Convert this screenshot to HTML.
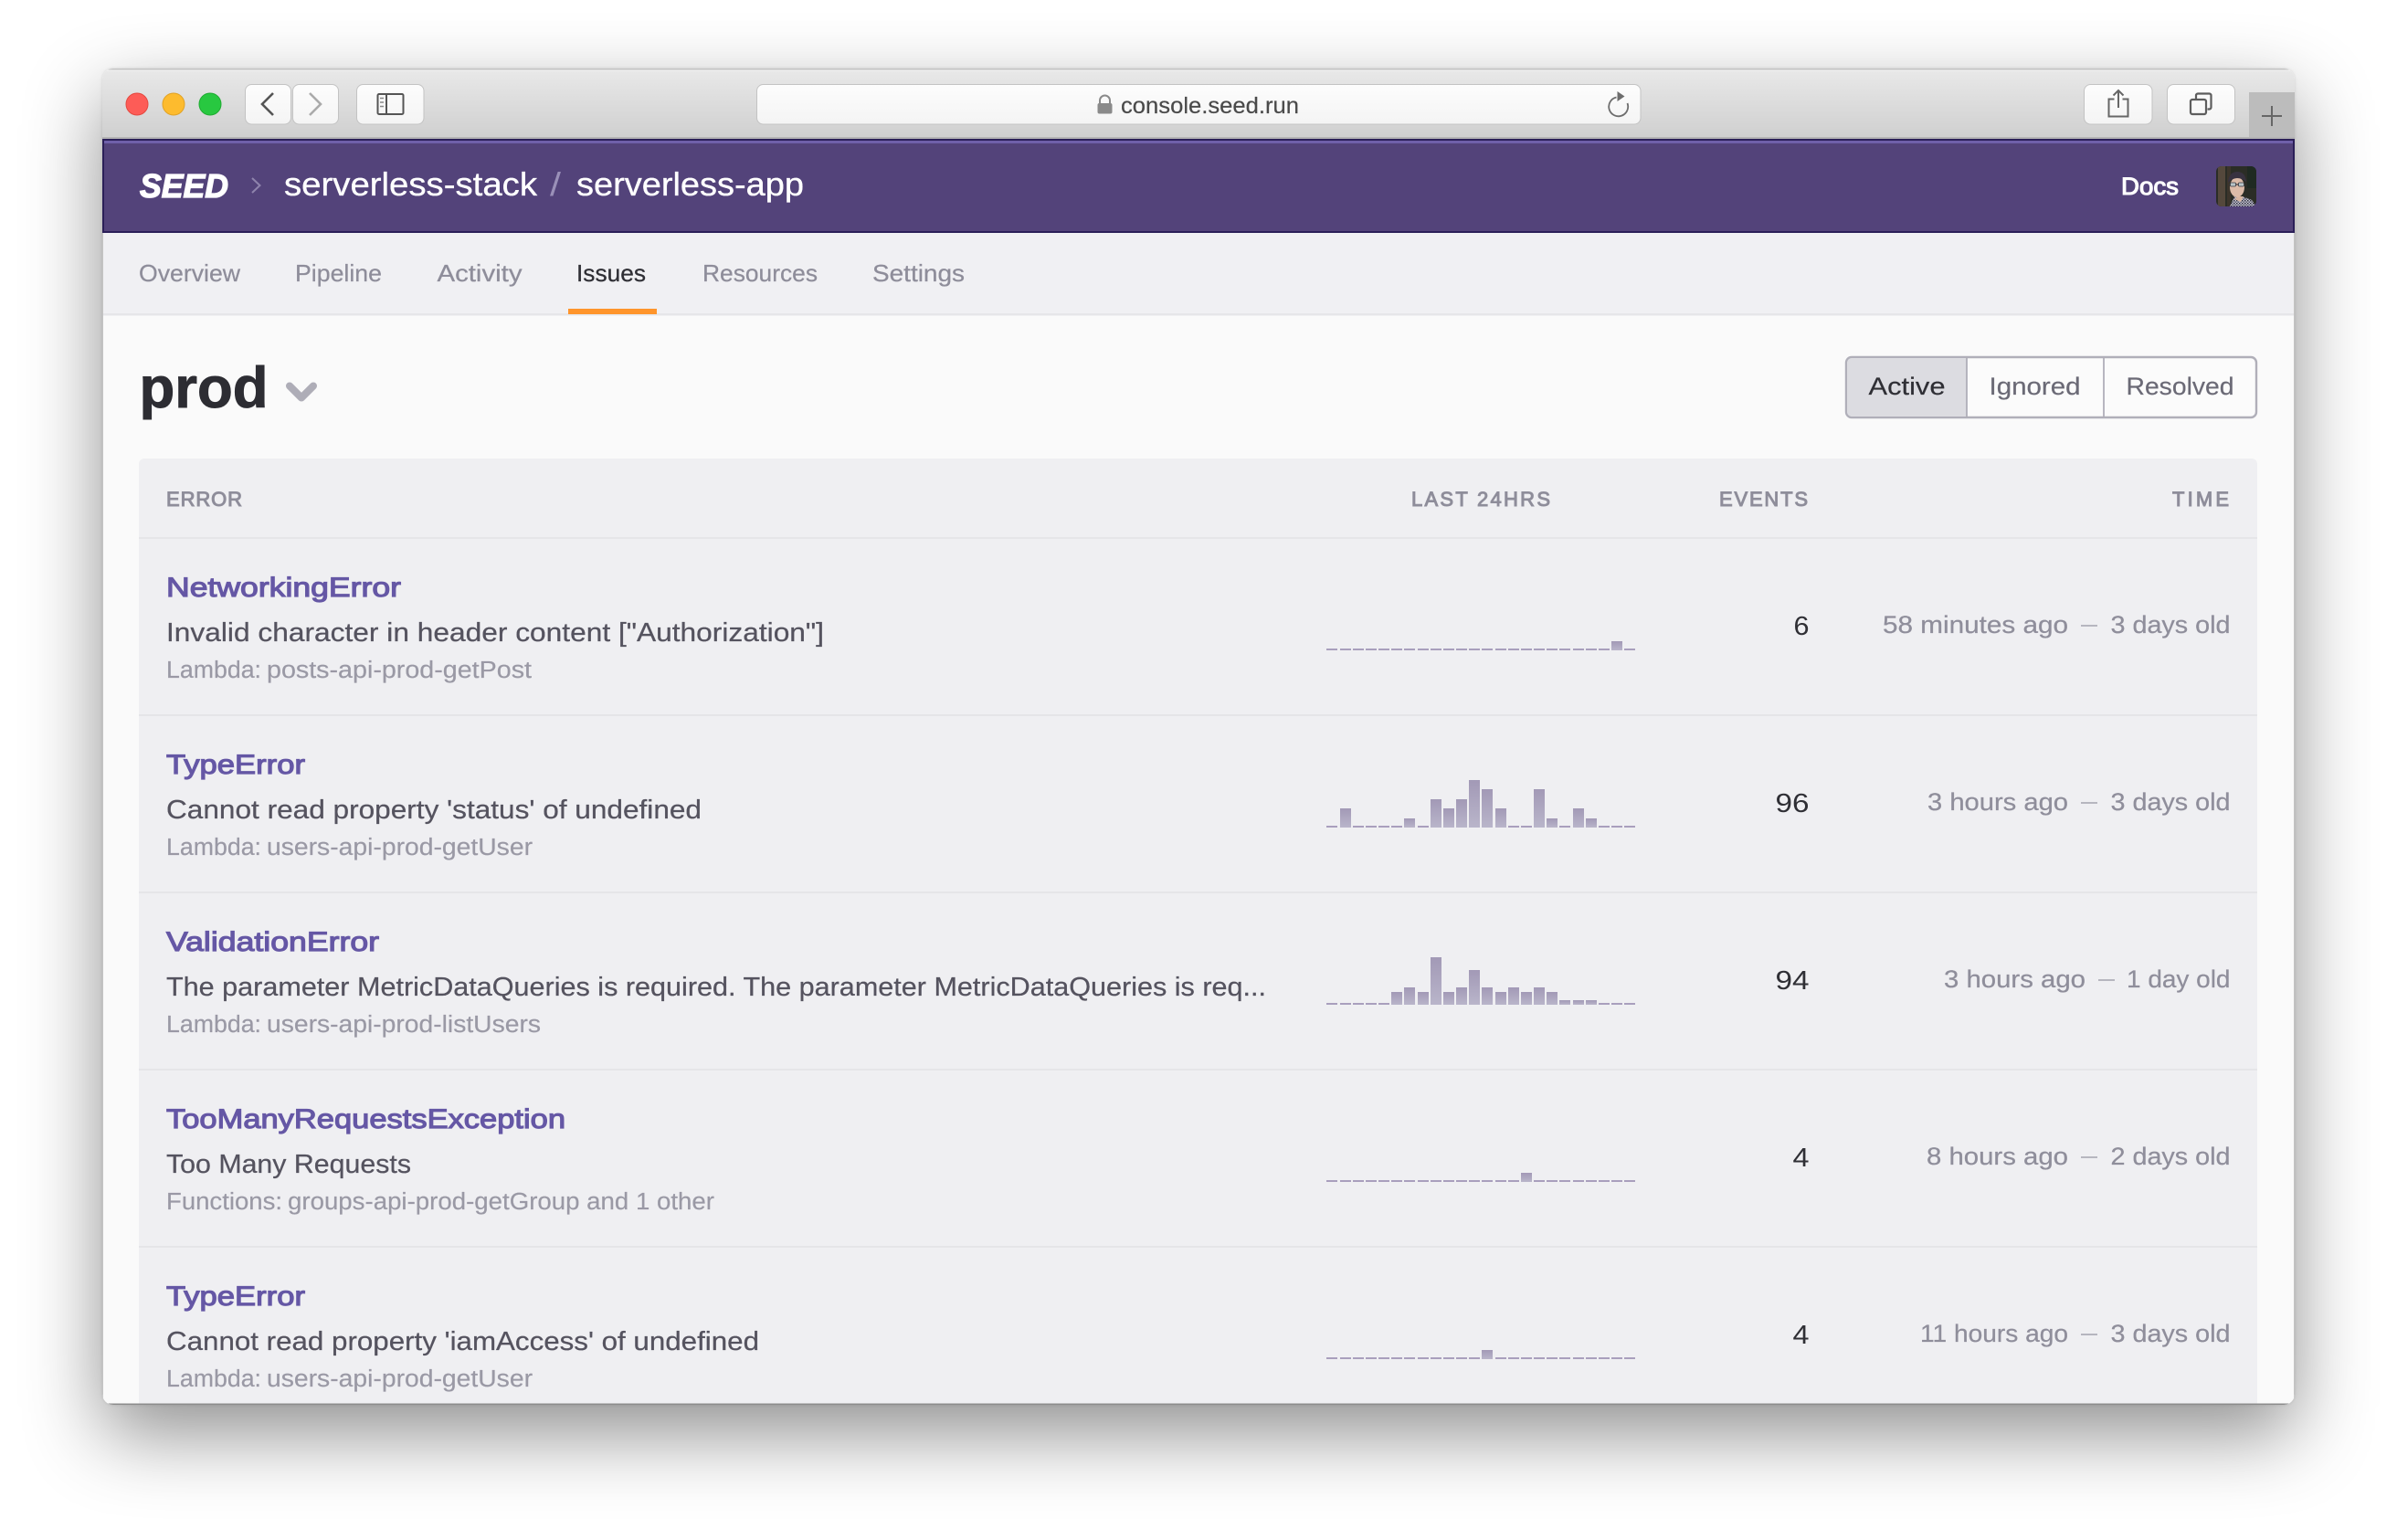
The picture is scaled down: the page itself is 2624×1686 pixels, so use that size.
<!DOCTYPE html>
<html lang="en">
<head>
<meta charset="utf-8">
<title>Issues - SEED</title>
<style>
html,body{margin:0;padding:0;width:2624px;height:1686px;background:#fff;overflow:hidden}
#win{position:absolute;left:112px;top:75px;width:2400px;height:1463px;border-radius:12px;box-shadow:0 32px 84px rgba(0,0,0,.44),0 0 3px rgba(0,0,0,.12)}
svg{position:absolute;left:0;top:0}
text{font-family:"Liberation Sans",sans-serif;white-space:pre}
.tab{font-size:26px;fill:#8e8d9a;stroke:#8e8d9a;stroke-width:.25px}
.hd{font-size:22px;fill:#8e8d9a;stroke:#8e8d9a;stroke-width:1px}
.t{font-size:30px;fill:#6557a5;stroke:#6557a5;stroke-width:1.15px}
.d{font-size:28.5px;fill:#55535f;stroke:#55535f;stroke-width:.25px}
.l{font-size:25.5px;fill:#9a99a5;stroke:#9a99a5;stroke-width:.2px}
.n{font-size:28.5px;fill:#2f2f35}
.r{font-size:27px;fill:#8f8e9b;stroke:#8f8e9b;stroke-width:.25px}
.seg{font-size:27px;fill:#6b6a76;stroke:#6b6a76;stroke-width:.2px}
.h1{font-size:36px;fill:#fff;stroke:#fff;stroke-width:.35px}
</style>
</head>
<body>
<div id="win"></div>
<svg width="2624" height="1686" viewBox="0 0 2624 1686" xmlns="http://www.w3.org/2000/svg">
<defs>
<clipPath id="w"><rect x="112" y="75" width="2400" height="1463" rx="12"/></clipPath>
<clipPath id="av"><rect x="2426" y="182" width="44" height="44" rx="6"/></clipPath>
<linearGradient id="tb" x1="0" y1="0" x2="0" y2="1"><stop offset="0" stop-color="#e9e9e9"/><stop offset="1" stop-color="#cfcfcf"/></linearGradient>
<linearGradient id="btn" x1="0" y1="0" x2="0" y2="1"><stop offset="0" stop-color="#fdfdfd"/><stop offset="1" stop-color="#f4f4f4"/></linearGradient>
<linearGradient id="bar" x1="0" y1="0" x2="0" y2="1"><stop offset="0" stop-color="#a299b6"/><stop offset="1" stop-color="#b9b5ca"/></linearGradient>
<pattern id="chk" width="3" height="3" patternUnits="userSpaceOnUse"><rect width="3" height="3" fill="#c9c9d4"/><rect width="1.500" height="1.500" fill="#2c2c3c"/><rect x="1.500" y="1.500" width="1.500" height="1.500" fill="#55556a"/></pattern>
<path id="dashes" fill="#a99fbd" d="M1452-2h12v2h-12zM1467-2h12v2h-12zM1481-2h12v2h-12zM1495-2h12v2h-12zM1509-2h12v2h-12zM1523-2h12v2h-12zM1537-2h12v2h-12zM1552-2h12v2h-12zM1566-2h12v2h-12zM1580-2h12v2h-12zM1594-2h12v2h-12zM1608-2h12v2h-12zM1622-2h12v2h-12zM1637-2h12v2h-12zM1651-2h12v2h-12zM1665-2h12v2h-12zM1679-2h12v2h-12zM1693-2h12v2h-12zM1707-2h12v2h-12zM1722-2h12v2h-12zM1736-2h12v2h-12zM1750-2h12v2h-12zM1764-2h12v2h-12zM1778-2h12v2h-12z"/>
</defs>

<g clip-path="url(#w)">
<!-- window base -->
<rect x="112" y="75" width="2400" height="1463" fill="#fafafa"/>

<!-- toolbar -->
<rect x="112" y="75" width="2400" height="77" fill="url(#tb)"/>
<rect x="112" y="75" width="2400" height="1.500" fill="#c4c4c4"/>
<rect x="112" y="76.500" width="2400" height="1.500" fill="#efefef"/>
<rect x="112" y="150" width="2400" height="2" fill="#b4b4b4"/>

<circle cx="150" cy="114" r="12" fill="#fd5c57" stroke="#e4483f" stroke-width="1"/>
<circle cx="190" cy="114" r="12" fill="#fdbb2e" stroke="#e0a226" stroke-width="1"/>
<circle cx="230" cy="114" r="12" fill="#28c840" stroke="#20ab32" stroke-width="1"/>

<g fill="url(#btn)" stroke="#c3c3c3" stroke-width="1">
<rect x="268.500" y="92.500" width="50" height="43.500" rx="7"/>
<rect x="320.500" y="92.500" width="50" height="43.500" rx="7"/>
<rect x="390.500" y="92.500" width="73.500" height="43.500" rx="7"/>
<rect x="828.500" y="92.500" width="967.500" height="43.500" rx="7"/>
<rect x="2281.500" y="92.500" width="74.500" height="43.500" rx="7"/>
<rect x="2372.500" y="92.500" width="74" height="43.500" rx="7"/>
</g>

<path d="M299 102L287 114L299 126" fill="none" stroke="#555" stroke-width="2.600"/>
<path d="M339 102L351 114L339 126" fill="none" stroke="#aaa" stroke-width="2.600"/>
<rect x="413.500" y="103" width="28" height="22" rx="1.500" fill="none" stroke="#555" stroke-width="2"/>
<path d="M423 103v22" stroke="#555" stroke-width="2"/>
<path d="M416 107.500h4M416 112h4M416 116.500h4" stroke="#888" stroke-width="1.600"/>

<!-- address -->
<path d="M1204 114v-4a5.500 5.500 0 0 1 11 0v4" fill="none" stroke="#8a8a8a" stroke-width="2"/>
<rect x="1201.500" y="113" width="16" height="11.500" rx="2" fill="#8a8a8a"/>
<text x="1227" y="124" font-size="25" fill="#4a4a4a" stroke="#4a4a4a" stroke-width=".2" textLength="195" lengthAdjust="spacingAndGlyphs">console.seed.run</text>
<path d="M1769.500 106.500A10.500 10.500 0 1 0 1781.500 113" fill="none" stroke="#6d6d6d" stroke-width="1.800"/>
<path d="M1770.500 100l8 5.500-8 5.500z" fill="#6d6d6d"/>

<!-- share / tabs -->
<path d="M2314.500 108.500H2308.500V127.500H2329.500V108.500H2323.500" fill="none" stroke="#666" stroke-width="2"/>
<path d="M2319 99v19M2313.500 104.500L2319 99l5.500 5.500" fill="none" stroke="#666" stroke-width="2"/>
<rect x="2398" y="109" width="17" height="16" rx="2" fill="none" stroke="#5d5d5d" stroke-width="2.200"/>
<path d="M2404 108v-3.500a2 2 0 0 1 2-2h12.500a2 2 0 0 1 2 2v13a2 2 0 0 1-2 2h-2" fill="none" stroke="#5d5d5d" stroke-width="2.200"/>

<rect x="2462" y="101" width="50" height="49" fill="#bcbcbc"/>
<path d="M2476 127h22M2487 116v22" stroke="#666" stroke-width="2"/>

<!-- purple header -->
<rect x="112" y="152" width="2400" height="103" fill="#2b1f58"/>
<rect x="114" y="154" width="2396" height="3" fill="#6f60aa"/>
<rect x="114" y="157" width="2396" height="96" fill="#53437a"/>

<text x="153" y="216" font-size="36" font-weight="700" font-style="italic" fill="#fff" stroke="#fff" stroke-width="1.300" textLength="97" lengthAdjust="spacingAndGlyphs">SEED</text>
<path d="M276 195l8.500 8-8.500 8" fill="none" stroke="#8f84ad" stroke-width="2"/>
<text class="h1" x="311" y="214" textLength="277" lengthAdjust="spacingAndGlyphs">serverless-stack</text>
<text x="602" y="214" font-size="36" fill="#9a90b8" textLength="12" lengthAdjust="spacingAndGlyphs">/</text>
<text class="h1" x="631" y="214" textLength="249" lengthAdjust="spacingAndGlyphs">serverless-app</text>
<text x="2322" y="213" font-size="27" fill="#fff" stroke="#fff" stroke-width="1.100" textLength="63" lengthAdjust="spacingAndGlyphs">Docs</text>

<!-- avatar -->
<g clip-path="url(#av)">
<rect x="2426" y="182" width="44" height="44" fill="#2b2d26"/>
<rect x="2428" y="182" width="8" height="44" fill="#54483c"/>
<rect x="2438" y="182" width="4" height="44" fill="#3c352b"/>
<rect x="2460" y="182" width="10" height="24" fill="#1f2a22"/>
<path d="M2441 226l5-11h9l10 4 5 7z" fill="url(#chk)"/>
<path d="M2446 218l4-3h6l-3 6z" fill="#d8b6a2"/>
<ellipse cx="2449" cy="205" rx="8" ry="11" fill="#dcbba8"/>
<path d="M2439 200q1-12 10-12t10 11q-5-4-10-4t-10 5z" fill="#383240"/>
<path d="M2440 202h17" stroke="#3a3a40" stroke-width="1.200"/>
<rect x="2441.500" y="200" width="6" height="4" rx="1" fill="#b8c4c8" stroke="#3a3a40" stroke-width=".8"/>
<rect x="2450.500" y="200" width="6" height="4" rx="1" fill="#b8c4c8" stroke="#3a3a40" stroke-width=".8"/>
</g>

<!-- nav -->
<rect x="112" y="255" width="2400" height="88" fill="#f0f0f3"/>
<rect x="112" y="343" width="2400" height="2.500" fill="#e6e6e9"/>
<text class="tab" x="152" y="308" textLength="111" lengthAdjust="spacingAndGlyphs">Overview</text>
<text class="tab" x="323" y="308" textLength="95" lengthAdjust="spacingAndGlyphs">Pipeline</text>
<text class="tab" x="478.500" y="308" textLength="93" lengthAdjust="spacingAndGlyphs">Activity</text>
<text class="tab" x="631" y="308" textLength="76" lengthAdjust="spacingAndGlyphs" style="fill:#2f2f35;stroke:#2f2f35">Issues</text>
<text class="tab" x="769" y="308" textLength="126" lengthAdjust="spacingAndGlyphs">Resources</text>
<text class="tab" x="955" y="308" textLength="101" lengthAdjust="spacingAndGlyphs">Settings</text>
<rect x="622" y="338" width="97" height="6" fill="#ff952b"/>

<!-- heading -->
<text x="152.500" y="446" font-size="63" font-weight="700" fill="#2d2d33" stroke="#2d2d33" stroke-width=".9" textLength="141" lengthAdjust="spacingAndGlyphs">prod</text>
<path d="M317 422.500L330 435.500L343 422.500" fill="none" stroke="#aeadb7" stroke-width="8" stroke-linejoin="round" stroke-linecap="round"/>

<!-- segmented -->
<rect x="2021" y="391" width="449" height="66" rx="6" fill="#fbfbfb" stroke="#b0afb9" stroke-width="2.400"/>
<path d="M2153 392H2027a5 5 0 0 0-5 5v54a5 5 0 0 0 5 5H2153z" fill="#dcdce1"/>
<path d="M2153 391v66M2303 391v66" stroke="#b0afb9" stroke-width="1.800"/>
<text class="seg" x="2045.500" y="432" textLength="84" lengthAdjust="spacingAndGlyphs" style="fill:#2f2f35;stroke:#2f2f35">Active</text>
<text class="seg" x="2177.500" y="432" textLength="100" lengthAdjust="spacingAndGlyphs">Ignored</text>
<text class="seg" x="2327.500" y="432" textLength="118" lengthAdjust="spacingAndGlyphs">Resolved</text>

<!-- table -->
<path d="M158 502H2465a6 6 0 0 1 6 6V1538H152V508a6 6 0 0 1 6-6z" fill="#efeff2"/>
<g fill="#e5e5e8">
<rect x="152" y="588" width="2319" height="2"/>
<rect x="152" y="782" width="2319" height="2"/>
<rect x="152" y="976" width="2319" height="2"/>
<rect x="152" y="1170" width="2319" height="2"/>
<rect x="152" y="1364" width="2319" height="2"/>
</g>
<text class="hd" x="182" y="554" textLength="83" lengthAdjust="spacing">ERROR</text>
<text class="hd" x="1545" y="554" textLength="152" lengthAdjust="spacing">LAST 24HRS</text>
<text class="hd" x="1882" y="554" textLength="97" lengthAdjust="spacing">EVENTS</text>
<text class="hd" x="2378" y="554" textLength="62" lengthAdjust="spacing">TIME</text>

<!-- row 1 -->
<text class="t" x="182" y="653" textLength="257" lengthAdjust="spacingAndGlyphs">NetworkingError</text>
<text class="d" x="182" y="702" textLength="720" lengthAdjust="spacingAndGlyphs">Invalid character in header content ["Authorization"]</text>
<text class="l" x="182" y="742" textLength="104" lengthAdjust="spacingAndGlyphs">Lambda:</text>
<text class="l" x="292" y="742" textLength="290" lengthAdjust="spacingAndGlyphs">posts-api-prod-getPost</text>
<use href="#dashes" transform="translate(0,712)"/>
<g fill="url(#bar)" transform="translate(0,712)"><rect x="1764" y="-10" width="12" height="10"/></g>
<text class="n" x="1963.500" y="695" textLength="17" lengthAdjust="spacingAndGlyphs">6</text>
<text class="r" x="2061" y="693" textLength="203" lengthAdjust="spacingAndGlyphs">58 minutes ago</text>
<rect x="2278" y="684" width="18" height="2" fill="#b6b6bf"/>
<text class="r" x="2310.500" y="693" textLength="131" lengthAdjust="spacingAndGlyphs">3 days old</text>

<!-- row 2 -->
<text class="t" x="182" y="847" textLength="152" lengthAdjust="spacingAndGlyphs">TypeError</text>
<text class="d" x="182" y="896" textLength="586" lengthAdjust="spacingAndGlyphs">Cannot read property 'status' of undefined</text>
<text class="l" x="182" y="936" textLength="104" lengthAdjust="spacingAndGlyphs">Lambda:</text>
<text class="l" x="292" y="936" textLength="291" lengthAdjust="spacingAndGlyphs">users-api-prod-getUser</text>
<use href="#dashes" transform="translate(0,906)"/>
<g fill="url(#bar)" transform="translate(0,906)">
<rect x="1467" y="-21" width="12" height="21"/>
<rect x="1537" y="-10" width="12" height="10"/>
<rect x="1566" y="-31" width="12" height="31"/>
<rect x="1580" y="-21" width="12" height="21"/>
<rect x="1594" y="-31" width="12" height="31"/>
<rect x="1608" y="-52" width="12" height="52"/>
<rect x="1622" y="-42" width="12" height="42"/>
<rect x="1637" y="-21" width="12" height="21"/>
<rect x="1679" y="-42" width="12" height="42"/>
<rect x="1693" y="-10" width="12" height="10"/>
<rect x="1722" y="-21" width="12" height="21"/>
<rect x="1736" y="-10" width="12" height="10"/>
</g>
<text class="n" x="1943.500" y="889" textLength="37" lengthAdjust="spacingAndGlyphs">96</text>
<text class="r" x="2110" y="887" textLength="154" lengthAdjust="spacingAndGlyphs">3 hours ago</text>
<rect x="2278" y="878" width="18" height="2" fill="#b6b6bf"/>
<text class="r" x="2310.500" y="887" textLength="131" lengthAdjust="spacingAndGlyphs">3 days old</text>

<!-- row 3 -->
<text class="t" x="182" y="1041" textLength="233" lengthAdjust="spacingAndGlyphs">ValidationError</text>
<text class="d" x="182" y="1090" textLength="1204" lengthAdjust="spacingAndGlyphs">The parameter MetricDataQueries is required. The parameter MetricDataQueries is req...</text>
<text class="l" x="182" y="1130" textLength="104" lengthAdjust="spacingAndGlyphs">Lambda:</text>
<text class="l" x="292" y="1130" textLength="300" lengthAdjust="spacingAndGlyphs">users-api-prod-listUsers</text>
<use href="#dashes" transform="translate(0,1100)"/>
<g fill="url(#bar)" transform="translate(0,1100)">
<rect x="1523" y="-14" width="12" height="14"/>
<rect x="1537" y="-19" width="12" height="19"/>
<rect x="1552" y="-14" width="12" height="14"/>
<rect x="1566" y="-52" width="12" height="52"/>
<rect x="1580" y="-14" width="12" height="14"/>
<rect x="1594" y="-19" width="12" height="19"/>
<rect x="1608" y="-38" width="12" height="38"/>
<rect x="1622" y="-19" width="12" height="19"/>
<rect x="1637" y="-14" width="12" height="14"/>
<rect x="1651" y="-19" width="12" height="19"/>
<rect x="1665" y="-14" width="12" height="14"/>
<rect x="1679" y="-19" width="12" height="19"/>
<rect x="1693" y="-14" width="12" height="14"/>
<rect x="1707" y="-5" width="12" height="5"/>
<rect x="1722" y="-5" width="12" height="5"/>
<rect x="1736" y="-5" width="12" height="5"/>
</g>
<text class="n" x="1943.500" y="1083" textLength="37" lengthAdjust="spacingAndGlyphs">94</text>
<text class="r" x="2128" y="1081" textLength="155" lengthAdjust="spacingAndGlyphs">3 hours ago</text>
<rect x="2297" y="1072" width="18" height="2" fill="#b6b6bf"/>
<text class="r" x="2328" y="1081" textLength="113.500" lengthAdjust="spacingAndGlyphs">1 day old</text>

<!-- row 4 -->
<text class="t" x="182" y="1235" textLength="437" lengthAdjust="spacingAndGlyphs">TooManyRequestsException</text>
<text class="d" x="182" y="1284" textLength="268" lengthAdjust="spacingAndGlyphs">Too Many Requests</text>
<text class="l" x="182" y="1324" textLength="127" lengthAdjust="spacingAndGlyphs">Functions:</text>
<text class="l" x="315" y="1324" textLength="467" lengthAdjust="spacingAndGlyphs">groups-api-prod-getGroup and 1 other</text>
<use href="#dashes" transform="translate(0,1294)"/>
<g fill="url(#bar)" transform="translate(0,1294)"><rect x="1665" y="-10" width="12" height="10"/></g>
<text class="n" x="1962.500" y="1277" textLength="18" lengthAdjust="spacingAndGlyphs">4</text>
<text class="r" x="2109" y="1275" textLength="155" lengthAdjust="spacingAndGlyphs">8 hours ago</text>
<rect x="2278" y="1266" width="18" height="2" fill="#b6b6bf"/>
<text class="r" x="2310.500" y="1275" textLength="131" lengthAdjust="spacingAndGlyphs">2 days old</text>

<!-- row 5 -->
<text class="t" x="182" y="1429" textLength="152" lengthAdjust="spacingAndGlyphs">TypeError</text>
<text class="d" x="182" y="1478" textLength="649" lengthAdjust="spacingAndGlyphs">Cannot read property 'iamAccess' of undefined</text>
<text class="l" x="182" y="1518" textLength="104" lengthAdjust="spacingAndGlyphs">Lambda:</text>
<text class="l" x="292" y="1518" textLength="291" lengthAdjust="spacingAndGlyphs">users-api-prod-getUser</text>
<use href="#dashes" transform="translate(0,1488)"/>
<g fill="url(#bar)" transform="translate(0,1488)"><rect x="1622" y="-10" width="12" height="10"/></g>
<text class="n" x="1962.500" y="1471" textLength="18" lengthAdjust="spacingAndGlyphs">4</text>
<text class="r" x="2102" y="1469" textLength="162" lengthAdjust="spacingAndGlyphs">11 hours ago</text>
<rect x="2278" y="1460" width="18" height="2" fill="#b6b6bf"/>
<text class="r" x="2310.500" y="1469" textLength="131" lengthAdjust="spacingAndGlyphs">3 days old</text>

<!-- window edges -->
<rect x="112" y="1536.500" width="2400" height="1.500" fill="#8c8c8c"/>
<rect x="112" y="255" width="1" height="1283" fill="#c4c4c4"/>
<rect x="2511" y="255" width="1" height="1283" fill="#c4c4c4"/>
</g>
</svg>
</body>
</html>
